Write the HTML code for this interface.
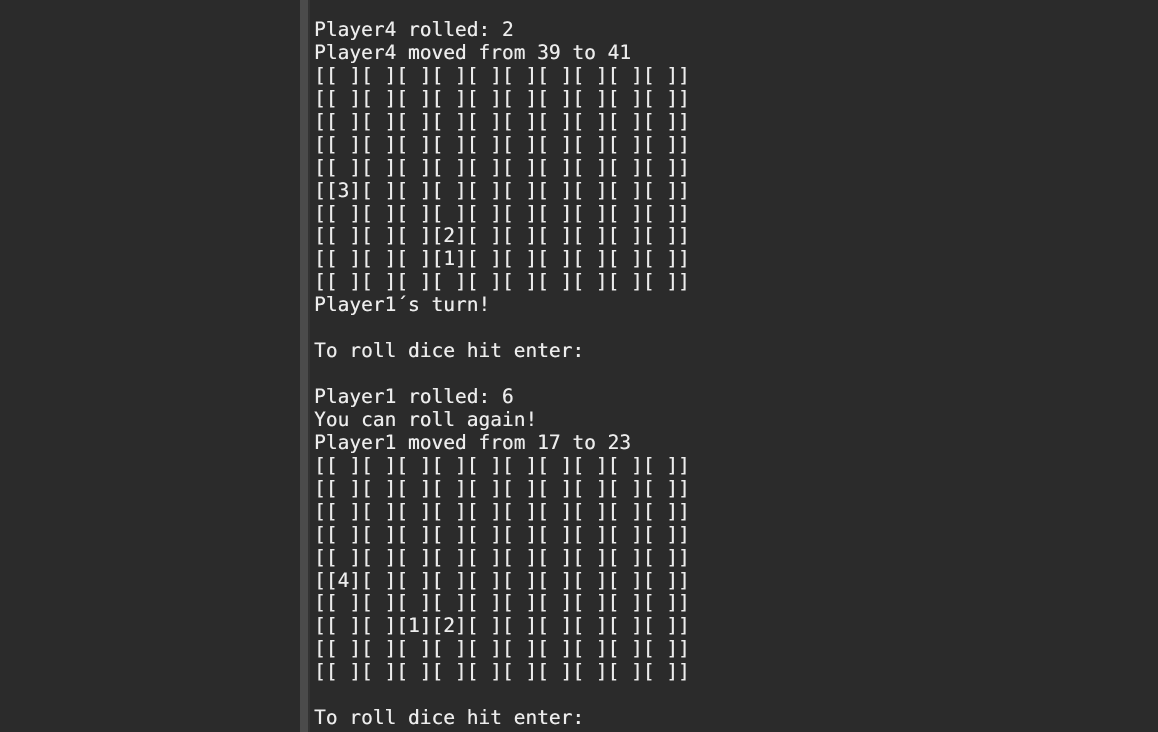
<!DOCTYPE html>
<html><head><meta charset="utf-8"><style>
html,body{margin:0;padding:0;width:1158px;height:732px;overflow:hidden;background:#2b2b2b;}
.bar{position:absolute;left:300px;top:0;width:8px;height:732px;background:#4b4b4b;}
.bar2{position:absolute;left:308px;top:0;width:2px;height:732px;background:#333;}
pre{position:absolute;left:314px;top:19px;margin:0;font-family:"DejaVu Sans Mono","Liberation Mono",monospace;font-size:19.5px;line-height:22.93px;color:#ececec;text-shadow:0.3px 0 0 #ececec;}
</style></head><body>
<div class="bar"></div><div class="bar2"></div>
<pre>Player4 rolled: 2
Player4 moved from 39 to 41
[[ ][ ][ ][ ][ ][ ][ ][ ][ ][ ]]
[[ ][ ][ ][ ][ ][ ][ ][ ][ ][ ]]
[[ ][ ][ ][ ][ ][ ][ ][ ][ ][ ]]
[[ ][ ][ ][ ][ ][ ][ ][ ][ ][ ]]
[[ ][ ][ ][ ][ ][ ][ ][ ][ ][ ]]
[[3][ ][ ][ ][ ][ ][ ][ ][ ][ ]]
[[ ][ ][ ][ ][ ][ ][ ][ ][ ][ ]]
[[ ][ ][ ][2][ ][ ][ ][ ][ ][ ]]
[[ ][ ][ ][1][ ][ ][ ][ ][ ][ ]]
[[ ][ ][ ][ ][ ][ ][ ][ ][ ][ ]]
Player1´s turn!

To roll dice hit enter:

Player1 rolled: 6
You can roll again!
Player1 moved from 17 to 23
[[ ][ ][ ][ ][ ][ ][ ][ ][ ][ ]]
[[ ][ ][ ][ ][ ][ ][ ][ ][ ][ ]]
[[ ][ ][ ][ ][ ][ ][ ][ ][ ][ ]]
[[ ][ ][ ][ ][ ][ ][ ][ ][ ][ ]]
[[ ][ ][ ][ ][ ][ ][ ][ ][ ][ ]]
[[4][ ][ ][ ][ ][ ][ ][ ][ ][ ]]
[[ ][ ][ ][ ][ ][ ][ ][ ][ ][ ]]
[[ ][ ][1][2][ ][ ][ ][ ][ ][ ]]
[[ ][ ][ ][ ][ ][ ][ ][ ][ ][ ]]
[[ ][ ][ ][ ][ ][ ][ ][ ][ ][ ]]

To roll dice hit enter:</pre>
</body></html>
